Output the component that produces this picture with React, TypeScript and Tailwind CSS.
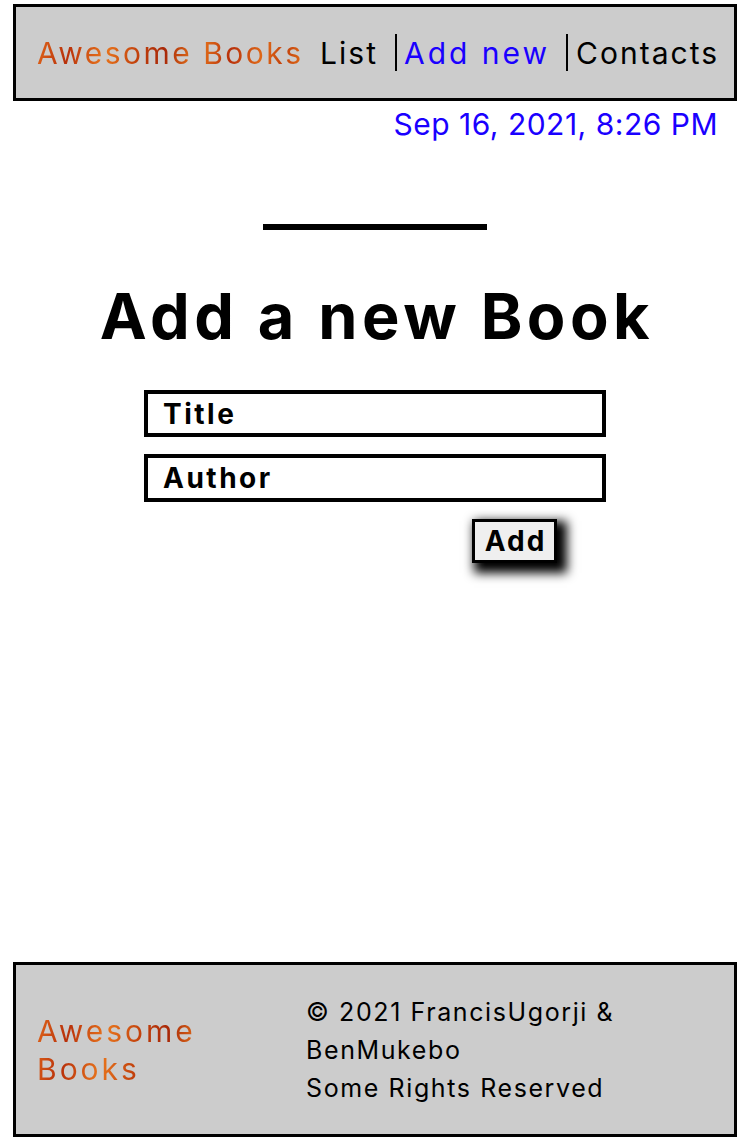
import React from "react";

const logo =
  "bg-[linear-gradient(100deg,#e0661a_0%,#b8300a_12%,#e8741c_26%,#c2410c_38%,#a82808_48%,#e8781c_60%,#b8300a_72%,#e06a18_84%,#c2410c_92%,#e47018_100%)] bg-clip-text text-transparent";

export default function App() {
  return (
    <div className="w-[750px] min-h-[1140px] bg-white text-black flex flex-col font-['Inter','Noto_Sans',sans-serif]">
      <header className="mx-[13px] mt-[4px] h-[97px] border-[3px] border-black bg-[#cccccc] flex items-center justify-between pl-[21px] pr-[15px]">
        <span className={`${logo} text-[30px] leading-none tracking-[2.5px]`}>Awesome Books</span>
        <nav className="flex items-center text-[30px] leading-none tracking-[2px]">
          <span className="pr-[17px]">List</span>
          <span className="border-l-[2px] border-black pl-[7px] pr-[16px] text-[#1a00ff] h-[37px] flex items-center tracking-[3px]">Add new</span>
          <span className="border-l-[2px] border-black pl-[8px] h-[37px] flex items-center">Contacts</span>
        </nav>
      </header>
      <div className="flex justify-end pr-[32px] mt-[4px] text-[30px] text-[#1a00ff] leading-[38px] tracking-[0.5px]">Sep 16, 2021, 8:26 PM</div>
      <main className="flex flex-col items-center">
        <div className="mt-[81px] w-[224px] h-[6px] bg-black" />
        <h1 className="mt-[55px] pl-[4px] text-[63px] font-bold leading-none tracking-[4.5px]">Add a new Book</h1>
        <form className="mt-[42px] flex flex-col w-[462px]">
          <div className="h-[47px] border-[4px] border-black flex items-center pl-[15px] text-[28px] font-bold tracking-[2.5px]">Title</div>
          <div className="mt-[17px] h-[48px] border-[4px] border-black flex items-center pl-[15px] text-[28px] font-bold tracking-[2.5px]">Author</div>
          <div className="mt-[17px] pl-[328px]">
            <button type="button" className="w-[85px] h-[44px] border-[3px] border-black bg-[#efefef] text-[28px] font-bold leading-none tracking-[2px] pl-[2px] shadow-[6px_6px_10px_4px_#000]">Add</button>
          </div>
        </form>
      </main>
      <footer className="mt-auto mx-[13px] mb-[3px] h-[175px] border-[3px] border-black bg-[#cccccc] flex items-center pl-[21px]">
        <div className={`${logo} w-[269px] text-[30px] leading-[38px] tracking-[3px]`}>
          Awesome
          <br />
          Books
        </div>
        <div className="text-[25px] leading-[38px] tracking-[1.6px]">
          © 2021 FrancisUgorji &amp;
          <br />
          BenMukebo
          <br />
          Some Rights Reserved
        </div>
      </footer>
    </div>
  );
}
